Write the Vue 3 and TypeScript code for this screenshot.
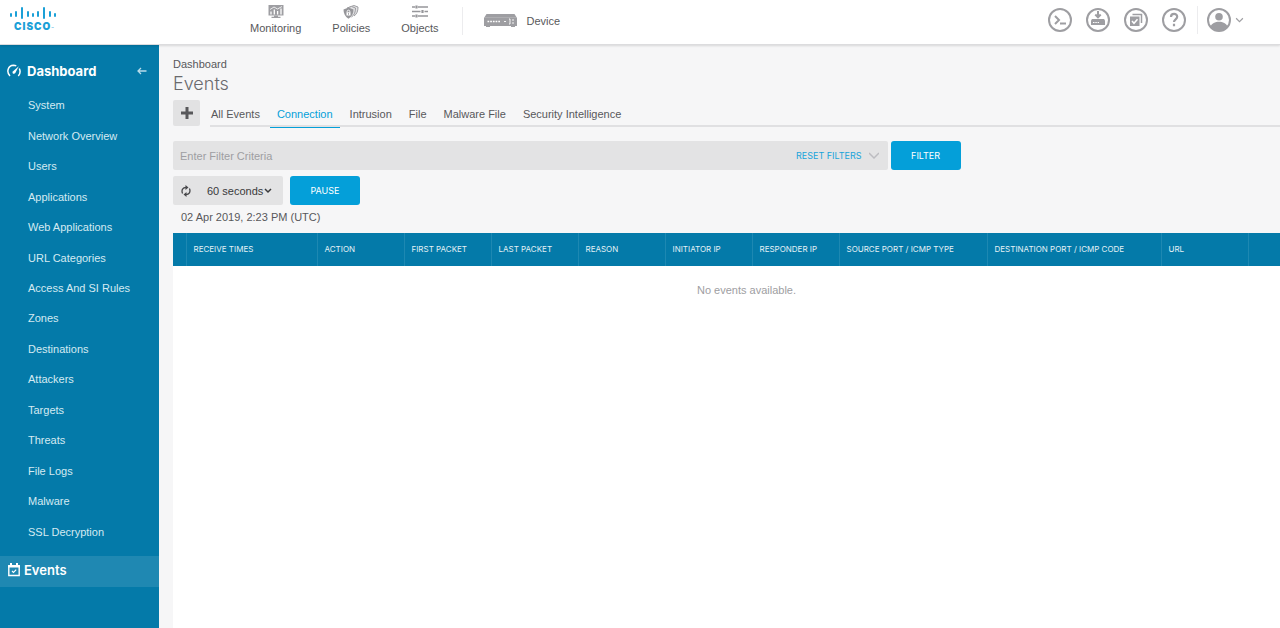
<script setup lang="ts">
import { ref } from 'vue'

interface Column { label: string; width: number | null }

const dashboards: string[] = [
  'System', 'Network Overview', 'Users', 'Applications', 'Web Applications',
  'URL Categories', 'Access And SI Rules', 'Zones', 'Destinations', 'Attackers',
  'Targets', 'Threats', 'File Logs', 'Malware', 'SSL Decryption',
]
const tabs: string[] = ['All Events', 'Connection', 'Intrusion', 'File', 'Malware File', 'Security Intelligence']
const columns: Column[] = [
  { label: '', width: 13 },
  { label: 'RECEIVE TIMES', width: 131 },
  { label: 'ACTION', width: 87 },
  { label: 'FIRST PACKET', width: 87 },
  { label: 'LAST PACKET', width: 87 },
  { label: 'REASON', width: 87 },
  { label: 'INITIATOR IP', width: 87 },
  { label: 'RESPONDER IP', width: 87 },
  { label: 'SOURCE PORT / ICMP TYPE', width: 148 },
  { label: 'DESTINATION PORT / ICMP CODE', width: 174 },
  { label: 'URL', width: 87 },
  { label: '', width: null },
]
const activeTab = ref('Connection')
const filter = ref('')
const interval = ref('60')
const logoBars = [
  [1, 8, 10], [6, 6, 10], [12, 2, 12], [18, 6, 10], [23, 8, 10],
  [28, 6, 10], [34, 2, 12], [40, 6, 10], [45, 8, 10],
]
</script>

<template>
  <div class="app">
    <header class="topbar">
      <a class="logo" href="#" aria-label="Home">
        <svg width="48" height="14" viewBox="0 0 48 14">
          <line v-for="b in logoBars" :key="b[0]" :x1="b[0]" :x2="b[0]" :y1="b[1]" :y2="b[2]" stroke="#1ba0d7" stroke-width="2" stroke-linecap="round" />
        </svg>
        <span class="wordmark">CISCO<span class="tm">™</span></span>
      </a>
      <nav class="primary">
        <a class="nav-item" href="#">
          <svg width="16" height="14" viewBox="0 0 16 14">
            <path d="M0.500 0h15v10.500h-15z" fill="#9e9ea2" />
            <path d="M3 9.500V6.500M6.300 9.500V4.500M9.600 9.500V6M13 9.500V3.500" stroke="#fff" stroke-width="1.300" />
            <path d="M2 4.500l4-2.500 3.500 2L14 1.500" stroke="#fff" fill="none" stroke-width=".8" />
            <path d="M6 10.500h4v1.300h2.500V13h-9v-1.200H6z" fill="#9e9ea2" />
          </svg>
          <span>Monitoring</span>
        </a>
        <a class="nav-item" href="#">
          <svg width="16" height="14" viewBox="0 0 16 14">
            <path d="M6.500 2L11 .5l4 1.500c0 4-1 7-4 9" fill="#e2e2e4" stroke="#9e9ea2" />
            <path d="M4 3l4.500-1.500 4 1.500c0 4-1 7-4 9" fill="#e2e2e4" stroke="#9e9ea2" />
            <path d="M.5 4.500L5.500 2.500l5 2c0 4-1.500 7-5 9.300-3.500-2.300-5-5.300-5-9.300z" fill="#96969a" />
            <path d="M3.500 7.300h4v3.200h-4z" fill="#fff" />
            <path d="M4.200 7.500V6.300c0-1.500 2.600-1.500 2.600 0v1.200" stroke="#fff" stroke-width=".9" fill="none" />
            <path d="M5.500 8.200v1.500" stroke="#96969a" />
          </svg>
          <span>Policies</span>
        </a>
        <a class="nav-item" href="#">
          <svg width="16" height="14" viewBox="0 0 16 14" stroke="#96969a" fill="none">
            <path d="M0 2h3M6 2h10M0 6.500h8.500M12.500 6.500H16M0 11h3M6 11h10" stroke-width="1.500" />
            <path d="M4.500 .5v3M10.500 5v3M4.500 9.500v3" stroke-width="2.200" />
          </svg>
          <span>Objects</span>
        </a>
      </nav>
      <a class="device" href="#">
        <svg width="33" height="14" viewBox="0 0 33 14">
          <path d="M2.500 0h28L33 4v8h-2v1h-4v-1H6v1H2v-1H0V4z" fill="#9e9ea2" />
          <path d="M1 3.500h31" stroke="#b8b8bc" stroke-width=".6" />
          <path d="M3.500 7.500h13" stroke="#fff" stroke-width="1.300" stroke-dasharray="1.700 1" />
          <path d="M20 7.500h2M25 5h1v5h-1M29 5v2M29 8v2" stroke="#fff" stroke-width=".9" fill="none" />
        </svg>
        <span>Device</span>
      </a>
      <div class="tools">
        <button type="button" aria-label="CLI console">
          <svg viewBox="0 0 24 24"><circle cx="12" cy="12" r="11" /><path d="M7 8l4 4-4 4M12 15.500h6" /></svg>
        </button>
        <button type="button" aria-label="Deployment">
          <svg viewBox="0 0 24 24"><circle cx="12" cy="12" r="11" /><path d="M12 3v6M9.300 6.500L12 9.300l2.700-2.800" /><path d="M6 11h12l1 1.500V17H5v-4.500z" class="solid" /><path d="M7 14.500h6" class="light" stroke-dasharray="1.500 .8" /></svg>
        </button>
        <button type="button" aria-label="Task list">
          <svg viewBox="0 0 24 24"><circle cx="12" cy="12" r="11" /><path d="M8.500 6.500H17.500V15" stroke-width="1.500" /><path d="M6 8.500h9.500V18H6z" class="solid" /><path d="M8 13l2 2.300 3.500-4" class="light check" /></svg>
        </button>
        <button type="button" aria-label="Help">
          <svg viewBox="0 0 24 24"><circle cx="12" cy="12" r="11" /><path d="M9 9c0-4 6.200-4 6.200-.3 0 2.500-3.200 2.700-3.200 5.300M12 15.800v2.400" stroke-width="2.200" /></svg>
        </button>
        <button type="button" class="user" aria-label="Account">
          <svg viewBox="0 0 24 24"><circle cx="12" cy="12" r="11" /><circle cx="12" cy="8.800" r="3.800" class="solid" /><path d="M3.500 18.500c2-6.500 15-6.500 17 0-4.500 5.800-12.500 5.800-17 0z" class="solid" /></svg>
          <svg class="caret" viewBox="0 0 8 6"><path d="M1 1l3 3 3-3" /></svg>
        </button>
      </div>
    </header>

    <div class="body">
      <aside class="sidebar">
        <div class="side-head">
          <svg width="14" height="14" viewBox="0 0 14 14" fill="none" stroke="#fff" stroke-width="1.500">
            <path d="M3 12C-1 8 1 1.500 6.500 1.300c1 0 2 .2 2.800.6M12.300 4.500c1.200 2.500.8 5.500-1 7.500" />
            <path d="M11.800 2.200L8.300 9c-1.300 1.700-3.600.2-2.500-1.600z" fill="#fff" stroke="none" />
          </svg>
          <a href="#">Dashboard</a>
          <button type="button" aria-label="Collapse menu">
            <svg width="10" height="8" viewBox="0 0 10 8" fill="none" stroke="#b8dcea" stroke-width="1.300"><path d="M9.500 4H1M4 1L1 4l3 3" /></svg>
          </button>
        </div>
        <ul class="side-list">
          <li v-for="name in dashboards" :key="name"><a href="#">{{ name }}</a></li>
        </ul>
        <a class="side-events" href="#">
          <svg width="12" height="14" viewBox="0 0 12 14" fill="none" stroke="#fff">
            <path d="M.8 2.800h10.400v9.700H.8z" stroke-width="1.400" />
            <path d="M0 3.500h12M3 0v3M9 0v3" stroke-width="2" />
            <path d="M4 8l1.500 1.500L8.200 6.700" stroke-width="1.100" />
          </svg>
          <span>Events</span>
        </a>
      </aside>

      <main class="content">
        <div class="crumb">Dashboard</div>
        <h1>Events</h1>
        <div class="tab-row">
          <button type="button" class="add" aria-label="Add view">
            <svg width="12" height="12" viewBox="0 0 12 12"><path d="M6 0v12M0 6h12" stroke="#58585b" stroke-width="3" /></svg>
          </button>
          <div class="tabs" role="tablist">
            <button v-for="tab in tabs" :key="tab" type="button" role="tab" :aria-selected="tab === activeTab" :class="{ active: tab === activeTab }" @click="activeTab = tab">{{ tab }}</button>
          </div>
        </div>

        <div class="filter-row">
          <div class="filter-box">
            <input v-model="filter" type="text" placeholder="Enter Filter Criteria" aria-label="Enter Filter Criteria" />
            <button type="button" class="reset" @click="filter = ''">RESET FILTERS</button>
            <button type="button" class="expand" aria-label="Show filter options">
              <svg width="10" height="8" viewBox="0 0 10 8" fill="none" stroke="#bcbcc0" stroke-width="1.500"><path d="M0 1l5 5 5-5" /></svg>
            </button>
          </div>
          <button type="button" class="primary-btn">FILTER</button>
        </div>

        <div class="refresh-row">
          <label class="refresh">
            <svg width="10" height="12" viewBox="0 0 10 12" fill="none" stroke="#48484b" stroke-width="1.300">
              <path d="M1.600 8.500C0 5 2 2.500 5 2.500M8.400 3.500C10 7 8 9.500 5 9.500" />
              <path d="M4.500 0v5L7.500 2.500zM5.500 7v5L2.500 9.500z" fill="#48484b" stroke="none" />
            </svg>
            <select v-model="interval" aria-label="Refresh interval">
              <option value="60">60 seconds</option>
            </select>
            <svg width="8" height="6" viewBox="0 0 8 6" fill="none" stroke="#39393b" stroke-width="1.500"><path d="M1 1l3 3 3-3" /></svg>
          </label>
          <button type="button" class="primary-btn">PAUSE</button>
        </div>
        <div class="stamp">02 Apr 2019, 2:23 PM (UTC)</div>

        <div class="grid">
          <table>
            <colgroup>
              <col v-for="(c, i) in columns" :key="i" :style="c.width ? { width: c.width + 'px' } : undefined" />
            </colgroup>
            <thead>
              <tr><th v-for="(c, i) in columns" :key="i" scope="col">{{ c.label }}</th></tr>
            </thead>
            <tbody>
              <tr><td :colspan="columns.length">No events available.</td></tr>
            </tbody>
          </table>
        </div>
      </main>
    </div>
  </div>
</template>

<style>
html, body { margin: 0; overflow-x: hidden; }
</style>

<style scoped>
* { box-sizing: border-box; }
.app {
  display: flex;
  flex-direction: column;
  min-height: 100vh;
  background: #f6f6f7;
  color: #58585b;
  font: 11px/16px "Liberation Sans", Arial, sans-serif;
}
a { color: inherit; text-decoration: none; }
button { font: inherit; color: inherit; border: 0; padding: 0; background: none; cursor: pointer; }
svg { flex: none; display: block; }

.topbar {
  display: flex;
  align-items: flex-start;
  height: 45px;
  background: #fff;
  border-bottom: 1px solid #dcdcde;
  box-shadow: 0 1px 2px rgba(0, 0, 0, .12);
  position: relative;
}
.logo { width: 240px; padding: 6px 0 0 10px; color: #1ba0d7; }
.wordmark { display: flex; padding-left: 4px; font: 900 10px/12px Inter, sans-serif; letter-spacing: 1px; }
.tm { font-size: 4px; line-height: 18px; font-weight: 400; }
.primary { display: flex; gap: 31px; padding: 5px 23px 0 10px; }
.nav-item { display: flex; flex-direction: column; align-items: center; line-height: 18px; }
.device { display: flex; align-items: center; gap: 10px; height: 28px; margin-top: 7px; padding-left: 21px; border-left: 1px solid #ececee; }
.tools { display: flex; gap: 14px; margin: 6px 36px 0 auto; }
.tools button { height: 28px; }
.tools svg { width: 24px; height: 24px; fill: none; stroke: #9e9ea2; stroke-width: 2; }
.tools .solid { fill: #9e9ea2; stroke: none; }
.tools .light { stroke: #fff; stroke-width: 1; }
.tools .check { stroke-width: 1.5; }
.tools .user { display: flex; align-items: center; gap: 4px; margin-left: -3px; padding-left: 9px; border-left: 1px solid #ececee; }
.tools .user .caret { width: 9px; height: 7px; stroke-width: 1; }

.body { display: flex; flex: 1; }
.sidebar { width: 159px; flex: none; background: #047aa9; color: #d5eaf2; }
.side-head { display: flex; align-items: center; height: 45px; padding: 7px 12px 0 7px; color: #fff; }
.side-head a { margin: 0 auto 0 6px; font: 700 13px/16px Inter, sans-serif; }
.side-list { display: grid; grid-auto-rows: 1fr; min-height: 457px; margin: 0; padding: 0; list-style: none; }
.side-list li { display: flex; align-items: center; padding-left: 28px; }
.side-events { display: flex; align-items: center; gap: 4px; height: 31px; margin-top: 9px; padding-left: 8px; padding-bottom: 3px; background: #1f88b2; color: #fff; font: 600 13px/16px Inter, sans-serif; }

.content { display: flex; flex-direction: column; flex: 1; min-width: 0; padding: 11px 0 0 14px; }
.crumb { line-height: 16px; }
h1 { margin: 0; font: 300 18px/24px Inter, sans-serif; color: #6a6a6d; }
.tab-row { display: flex; gap: 10px; margin-top: 4px; }
.add { display: flex; align-items: center; justify-content: center; width: 27px; height: 26px; background: #e2e2e3; border-radius: 2px; }
.tabs { display: flex; flex: 1; height: 27px; border-bottom: 2px solid #e0e0e2; }
.tabs button { height: 28px; margin-right: 3px; padding: 0 7px; border-bottom: 1px solid transparent; }
.tabs button:first-child { padding-left: 1px; }
.tabs .active { color: #049fd9; border-color: #049fd9; }

.filter-row { display: flex; gap: 3px; margin-top: 14px; }
.filter-box { display: flex; align-items: center; width: calc(65% - 5px); height: 29px; padding: 0 9px 0 7px; background: #e3e3e4; border-radius: 2px; }
.filter-box input { flex: 1; height: 29px; padding: 0; border: 0; outline: 0; background: none; font: inherit; color: #58585b; }
.filter-box input::placeholder { color: #9e9ea2; opacity: 1; }
.reset { margin-right: 7px; color: #18a3da; font: 9px/16px Inter, sans-serif; }
.primary-btn { width: 70px; height: 29px; border-radius: 3px; background: #049fd9; color: #fff; font: 9px/16px Inter, sans-serif; }
.refresh-row { display: flex; gap: 7px; margin-top: 6px; }
.refresh { display: flex; align-items: center; width: 110px; height: 29px; padding-left: 8px; background: #e3e3e4; border-radius: 2px; color: #39393b; }
.refresh select { appearance: none; margin-left: 16px; padding: 0; border: 0; outline: 0; background: none; font: inherit; color: inherit; }
.stamp { margin-top: 4px; padding-left: 8px; line-height: 16px; }

.grid { flex: 1; margin-top: 8px; background: #fff; }
table { width: 100%; table-layout: fixed; border-collapse: collapse; }
th { height: 33px; padding: 0 0 2px 7px; background: #047aa9; border-left: 1px solid #1d88b2; color: #e3f1f6; font: 400 8px/12px Inter, sans-serif; text-align: left; white-space: nowrap; }
th:first-child { padding: 0; border-left: 0; }
td { height: 48px; padding: 0 0 0 40px; color: #9e9ea2; text-align: center; }
</style>
